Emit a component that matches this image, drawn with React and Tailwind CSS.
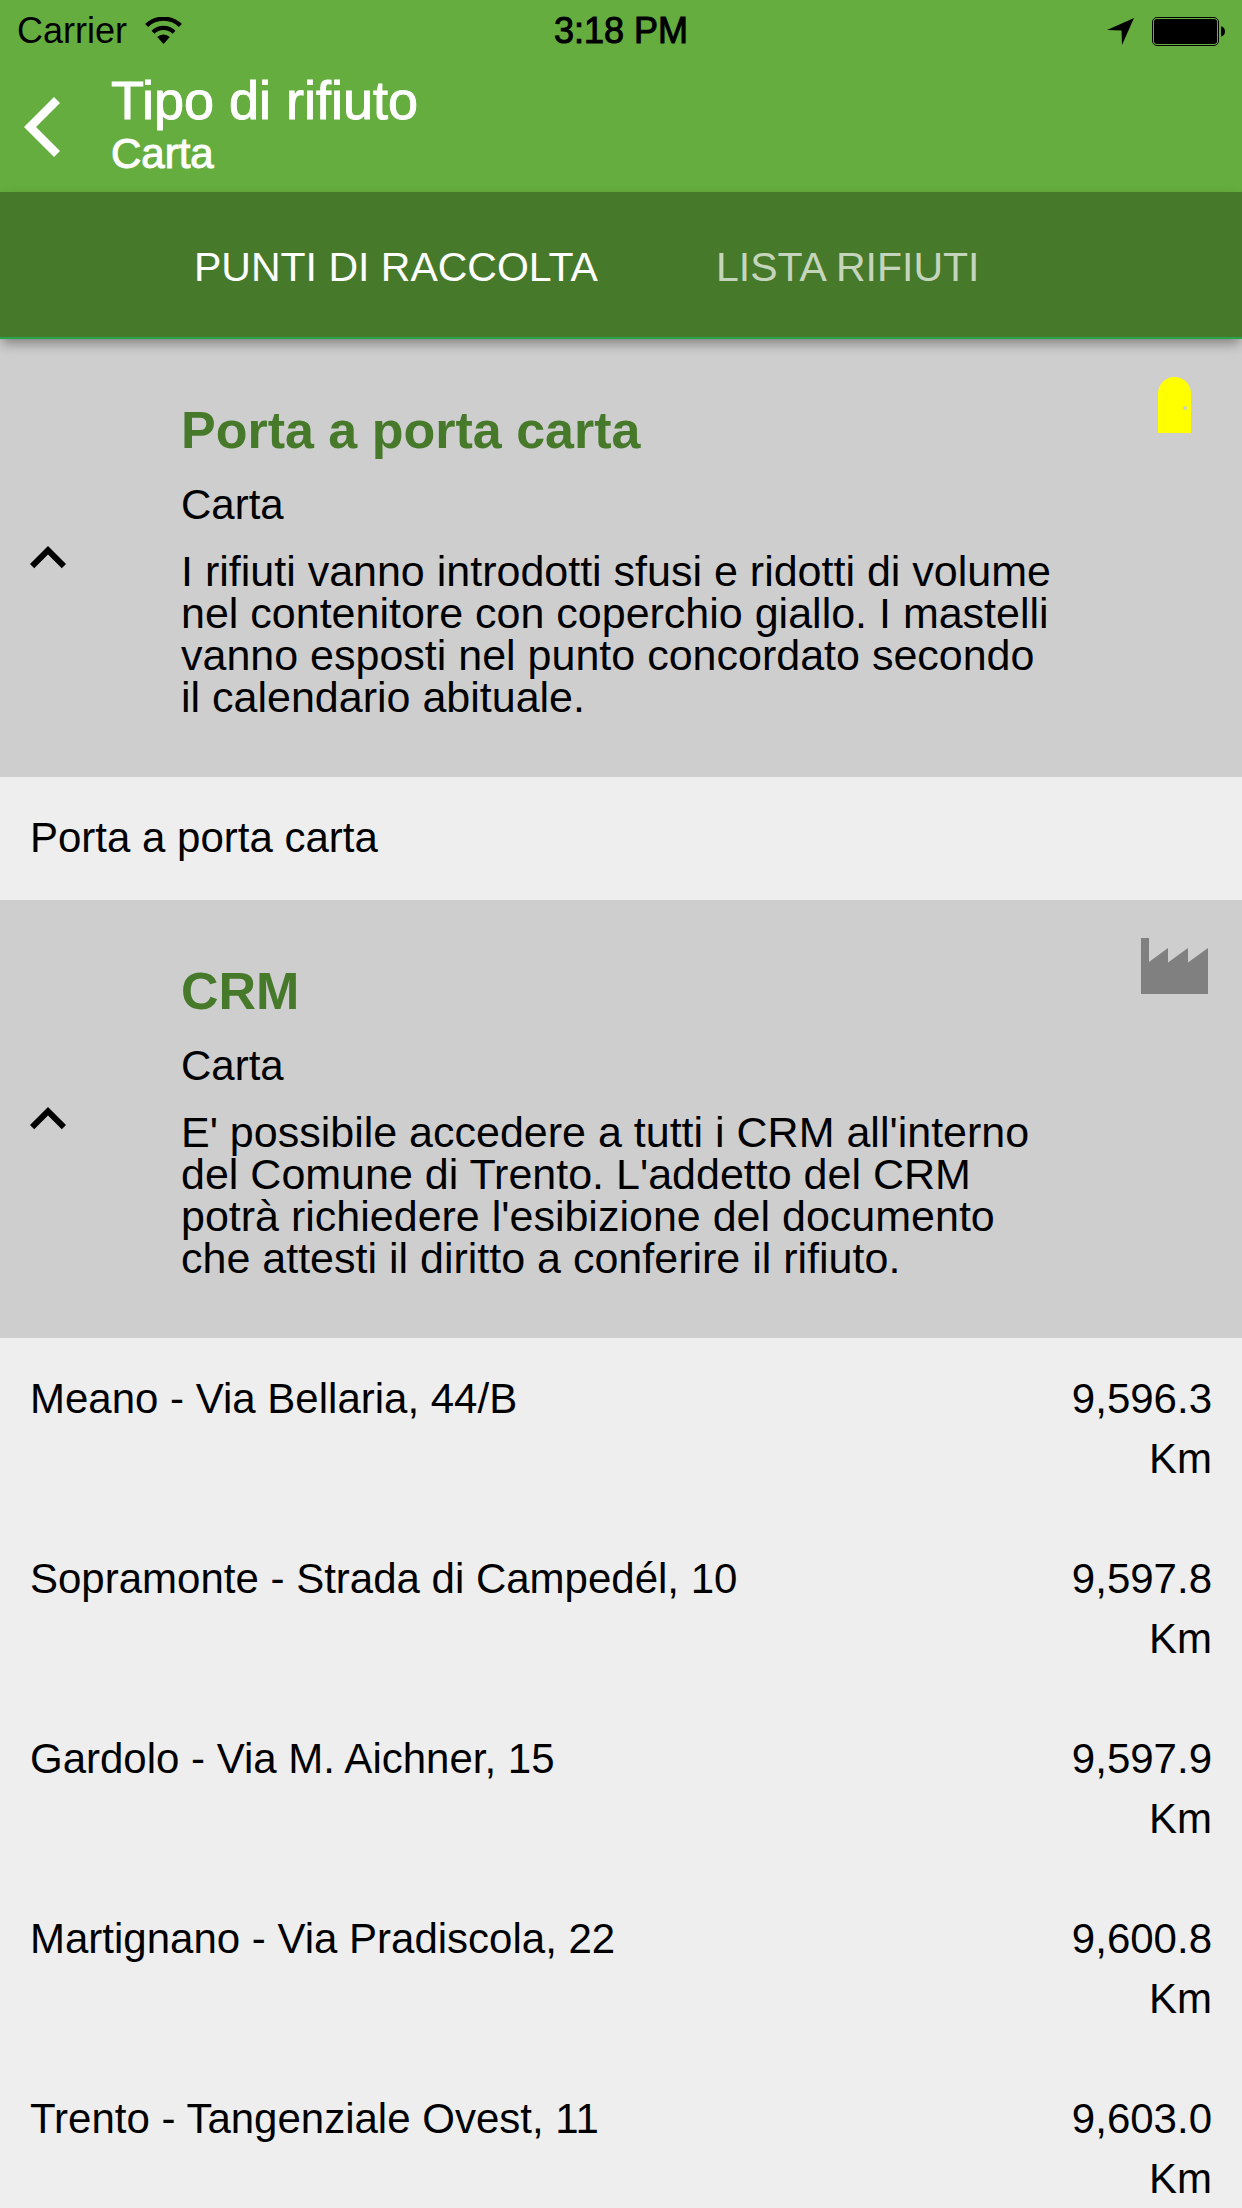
import { useState } from "react";

const sections = [
  {
    title: "Porta a porta carta",
    category: "Carta",
    description:
      "I rifiuti vanno introdotti sfusi e ridotti di volume nel contenitore con coperchio giallo. I mastelli vanno esposti nel punto concordato secondo il calendario abituale.",
    Icon: DoorIcon,
    places: [{ name: "Porta a porta carta" }],
  },
  {
    title: "CRM",
    category: "Carta",
    description:
      "E' possibile accedere a tutti i CRM all'interno del Comune di Trento. L'addetto del CRM potrà richiedere l'esibizione del documento che attesti il diritto a conferire il rifiuto.",
    Icon: FactoryIcon,
    places: [
      { name: "Meano - Via Bellaria, 44/B", distance: "9,596.3 Km" },
      { name: "Sopramonte - Strada di Campedél, 10", distance: "9,597.8 Km" },
      { name: "Gardolo - Via M. Aichner, 15", distance: "9,597.9 Km" },
      { name: "Martignano - Via Pradiscola, 22", distance: "9,600.8 Km" },
      { name: "Trento - Tangenziale Ovest, 11", distance: "9,603.0 Km" },
    ],
  },
];

function WifiIcon() {
  return (
    <svg className="h-7 w-[37px]" viewBox="0 0 37 28" aria-hidden="true">
      <g fill="none" stroke="black" strokeWidth="4.2">
        <path d="M1.6 8.6a24 24 0 0 1 33.8 0" />
        <path d="M8 15.2a15 15 0 0 1 21 0" />
      </g>
      <path d="M12.2 20.1a9 9 0 0 1 12.6 0L18.500 27z" />
    </svg>
  );
}

function LocationIcon() {
  return (
    <svg className="h-[27px] w-[27px]" viewBox="0 0 27 27" aria-hidden="true">
      <path d="M27 0 15 27 14.500 12.500 0 12z" />
    </svg>
  );
}

function BatteryIcon() {
  return (
    <svg className="h-[29px] w-[73px]" viewBox="0 0 73 29" aria-hidden="true">
      <rect x="0.5" y="0.5" width="66" height="28" rx="4.500" fill="none" stroke="black" />
      <rect x="2" y="2" width="63" height="25" rx="3" />
      <path d="M69 9.500a4 5 0 0 1 0 10z" />
    </svg>
  );
}

function DoorIcon() {
  return (
    <svg className="h-14 w-[67px]" viewBox="0 0 67 56" aria-hidden="true">
      <path fill="#ffff00" d="M17 56V16.500a16.500 16.500 0 0 1 33 0V56z" />
      <circle cx="44" cy="31" r="2" fill="#cecece" />
    </svg>
  );
}

function FactoryIcon() {
  return (
    <svg className="h-14 w-[67px]" viewBox="0 0 67 56" aria-hidden="true">
      <path fill="#808080" d="M0 0h8v24L27 10v14.500L47 10v14.500L67 10v46H0z" />
    </svg>
  );
}

function Section({ title, category, description, Icon, places }) {
  const [open, setOpen] = useState(true);
  return (
    <section>
      <button
        type="button"
        aria-expanded={open}
        onClick={() => setOpen(!open)}
        className="flex w-full items-stretch bg-[#cecece] text-left"
      >
        <span className="flex w-[181px] shrink-0 items-center pl-3">
          <svg className={open ? "size-[72px]" : "size-[72px] rotate-180"} viewBox="0 0 24 24" aria-hidden="true">
            <path d="M12 8l-6 6 1.410 1.410L12 10.830l4.590 4.580L18 14z" />
          </svg>
        </span>
        <span className="flex flex-1 flex-col gap-[15px] pt-[61px] pb-[59px]">
          <span className="text-[52px] leading-[60px] font-bold text-[#47792b]">{title}</span>
          <span className="leading-[60px]">{category}</span>
          <span className="text-[43px] leading-[42px]">{description}</span>
        </span>
        <span className="flex w-[185px] shrink-0 justify-end pt-[38px] pr-[34px]">
          <Icon />
        </span>
      </button>
      {open && (
        <ul>
          {places.map((place) => (
            <li key={place.name} className="flex min-h-[123px] justify-between px-[30px] pt-[31px] pb-[29px] leading-[60px]">
              <span>{place.name}</span>
              {place.distance && <span className="w-[150px] text-right">{place.distance}</span>}
            </li>
          ))}
        </ul>
      )}
    </section>
  );
}

export default function App() {
  return (
    <div className="flex h-screen flex-col bg-[#eeeeee] font-['Liberation_Sans',Arial,sans-serif] text-[42px] text-black">
      <header className="bg-[#65ad3f]">
        <div className="grid h-[62px] grid-cols-3 items-center px-[17px] text-[36px] leading-[60px]">
          <div className="flex items-center gap-[18px]">
            <span>Carrier</span>
            <WifiIcon />
          </div>
          <time className="text-center [-webkit-text-stroke:1px_black]">3:18 PM</time>
          <div className="flex items-center justify-end gap-[18px]">
            <LocationIcon />
            <BatteryIcon />
          </div>
        </div>
        <div className="flex h-[130px] items-center text-white">
          <button type="button" aria-label="Indietro" className="flex h-full w-[111px] items-center pl-6">
            <svg className="h-[60px] w-9" viewBox="0 0 36 60" aria-hidden="true">
              <path fill="white" d="M30 0 0 30 30 60 36 54 12 30 36 6z" />
            </svg>
          </button>
          <div className="leading-[54px] [-webkit-text-stroke:1px_white]">
            <h1 className="text-[54px]">Tipo di rifiuto</h1>
            <p>Carta</p>
          </div>
        </div>
      </header>
      <nav
        role="tablist"
        className="z-10 flex h-[147px] shrink-0 gap-[118px] border-b-2 border-[#27a34a] bg-[#47792b] px-[194px] text-[41px] text-white shadow-[0_6px_12px_-2px_rgba(0,0,0,0.4)]"
      >
        <button type="button" role="tab" aria-selected="true" className="pt-1.5">
          PUNTI DI RACCOLTA
        </button>
        <button type="button" role="tab" aria-selected="false" className="pt-1.5 text-white/70">
          LISTA RIFIUTI
        </button>
      </nav>
      <main className="flex-1 overflow-y-auto [scrollbar-width:none]">
        {sections.map((section) => (
          <Section key={section.title} {...section} />
        ))}
      </main>
    </div>
  );
}
